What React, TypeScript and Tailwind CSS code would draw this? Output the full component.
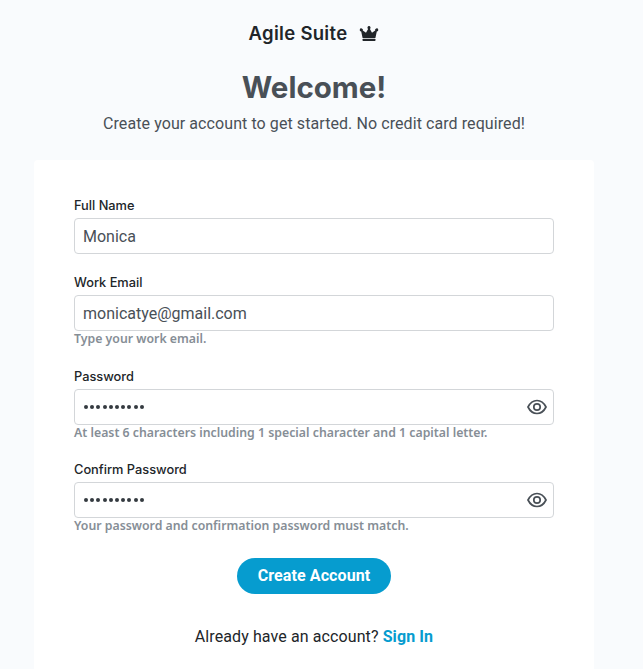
const heading = 'font-["Inter",sans-serif]';

interface FieldProps {
  label: string;
  value: string;
  hint?: string;
  password?: boolean;
  className?: string;
}

function Crown() {
  return (
    <svg viewBox="0 0 20 15" className="w-[20px] h-[15px] mb-[2px] fill-[#212529]">
      <path d="M10 0a1.600 1.600 0 0 1 .9 2.900L13 6.800l3.200-2.200a1.600 1.600 0 1 1 1.600 1L16.400 12H3.600L2.200 5.600a1.600 1.600 0 1 1 1.600-1L7 6.800l2.100-3.900A1.600 1.600 0 0 1 10 0z" />
      <rect x="3.600" y="12.800" width="12.800" height="2.200" rx="0.500" />
    </svg>
  );
}

function EyeIcon() {
  return (
    <svg viewBox="0 0 20 16" fill="none" className="w-[20px] h-[16px] stroke-[#495057]" strokeWidth="1.700">
      <path d="M1 8c2-4 5.200-6.500 9-6.500S17 4 19 8c-2 4-5.200 6.500-9 6.500S3 12 1 8z" />
      <circle cx="10" cy="8" r="3.200" />
    </svg>
  );
}

function Field({ label, value, hint, password, className }: FieldProps) {
  return (
    <div className={className}>
      <div className={`${heading} text-[12.800px] leading-[15px] font-medium text-[#212529] mb-[5px]`}>{label}</div>
      <div className="h-[36px] bg-white border border-[#d3d6d9] rounded-[4px] flex items-center justify-between pl-[8px] pr-[6px]">
        {password ? (
          <span className="flex gap-[2.200px] ml-[1px]">
            {Array.from({ length: 10 }).map((_, i) => (
              <span key={i} className="w-[4px] h-[4px] rounded-full bg-[#343a40]" />
            ))}
          </span>
        ) : (
          <span className="text-[16px] text-[#495057] pt-[1px]">{value}</span>
        )}
        {password && <EyeIcon />}
      </div>
      {hint && <div className='font-["Noto_Sans",sans-serif] text-[12.300px] leading-[16px] font-semibold text-[#868e96]'>{hint}</div>}
    </div>
  );
}

export default function App() {
  return (
    <div className='h-[669px] overflow-hidden bg-[#f9fbfd] font-["Roboto",sans-serif]'>
      <div className="w-[628px]">
        <div className="flex items-center justify-center gap-[12px] pt-[22px] h-[46px]">
          <span className={`${heading} text-[18.500px] tracking-[0.3px] font-semibold text-[#212529]`}>Agile Suite</span>
          <Crown />
        </div>
        <h1 className={`${heading} text-[29.500px] leading-[34px] font-bold text-[#495057] text-center mt-[24px]`}>Welcome!</h1>
        <p className="text-[16px] tracking-[0.08px] leading-[20px] text-[#495057] text-center mt-[10px]">
          Create your account to get started. No credit card required!
        </p>
      </div>
      <div className="bg-white w-[560px] ml-[34px] mt-[26px] rounded-t-[4px] px-[40px] pt-[38px] h-[520px]">
        <Field label="Full Name" value="Monica" />
        <Field label="Work Email" value="monicatye@gmail.com" hint="Type your work email." className="mt-[21px]" />
        <Field label="Password" value="" password hint="At least 6 characters including 1 special character and 1 capital letter." className="mt-[22px]" />
        <Field label="Confirm Password" value="" password hint="Your password and confirmation password must match." className="mt-[21px]" />
        <div className="flex justify-center mt-[24px]">
          <button className="w-[154px] h-[36px] rounded-full bg-[#069ccf] text-white text-[16px] tracking-[0.1px] font-bold">Create Account</button>
        </div>
        <p className="text-[16px] tracking-[0.1px] leading-[20px] text-[#212529] text-center mt-[33px]">
          Already have an account? <span className="font-bold text-[#069ccf]">Sign In</span>
        </p>
      </div>
    </div>
  );
}
